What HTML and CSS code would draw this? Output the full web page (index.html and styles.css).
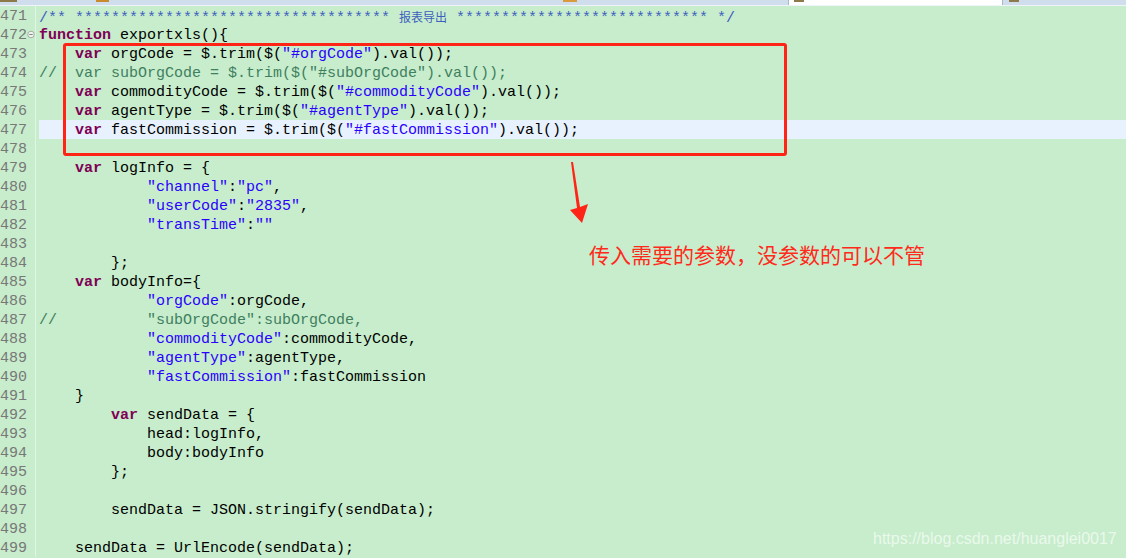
FILE: index.html
```html
<!DOCTYPE html>
<html lang="en">
  <head>
    <meta charset="utf-8">
    <meta name="viewport" content="width=device-width, initial-scale=1.0">
    <title>exportxls</title>
    <link rel="stylesheet" href="styles.css">
  </head>
  <body>
    <div class="tabs">
      <div class="tab"><i class="tab-icon"></i></div>
      <div class="tab"><i class="tab-icon"></i></div>
      <div class="tab"><i class="tab-icon orange"></i></div>
      <div class="tab active"><i class="tab-icon"></i></div>
      <div class="tab last"><i class="tab-icon"></i></div>
    </div>

    <div class="editor">
      <div class="line"><span class="num">471</span><span class="fold"></span><span class="code"><span class="doc">/** *********************************** <span class="cjk">报表导出</span> **************************** */</span></span></div>
      <div class="line"><span class="num">472</span><span class="fold"><svg width="9" height="9" viewBox="0 0 9 9"><circle cx="4.5" cy="4.5" r="3.7" fill="#eef4ee" stroke="#9aa59a"/><path d="M2.6 4.5h3.8" stroke="#6d786d"/></svg></span><span class="code"><b class="kw">function</b> exportxls(){</span></div>
      <div class="line"><span class="num">473</span><span class="fold"></span><span class="code">    <b class="kw">var</b> orgCode = $.trim($(<span class="str">"#orgCode"</span>).val());</span></div>
      <div class="line"><span class="num">474</span><span class="fold"></span><span class="code"><span class="cm">//  var subOrgCode = $.trim($("#subOrgCode").val());</span></span></div>
      <div class="line"><span class="num">475</span><span class="fold"></span><span class="code">    <b class="kw">var</b> commodityCode = $.trim($(<span class="str">"#commodityCode"</span>).val());</span></div>
      <div class="line"><span class="num">476</span><span class="fold"></span><span class="code">    <b class="kw">var</b> agentType = $.trim($(<span class="str">"#agentType"</span>).val());</span></div>
      <div class="line current"><span class="num">477</span><span class="fold"></span><span class="code">    <b class="kw">var</b> fastCommission = $.trim($(<span class="str">"#fastCommission"</span>).val());</span></div>
      <div class="line"><span class="num">478</span><span class="fold"></span><span class="code"></span></div>
      <div class="line"><span class="num">479</span><span class="fold"></span><span class="code">    <b class="kw">var</b> logInfo = {</span></div>
      <div class="line"><span class="num">480</span><span class="fold"></span><span class="code">            <span class="str">"channel"</span>:<span class="str">"pc"</span>,</span></div>
      <div class="line"><span class="num">481</span><span class="fold"></span><span class="code">            <span class="str">"userCode"</span>:<span class="str">"2835"</span>,</span></div>
      <div class="line"><span class="num">482</span><span class="fold"></span><span class="code">            <span class="str">"transTime"</span>:<span class="str">""</span></span></div>
      <div class="line"><span class="num">483</span><span class="fold"></span><span class="code"></span></div>
      <div class="line"><span class="num">484</span><span class="fold"></span><span class="code">        };</span></div>
      <div class="line"><span class="num">485</span><span class="fold"></span><span class="code">    <b class="kw">var</b> bodyInfo={</span></div>
      <div class="line"><span class="num">486</span><span class="fold"></span><span class="code">            <span class="str">"orgCode"</span>:orgCode,</span></div>
      <div class="line"><span class="num">487</span><span class="fold"></span><span class="code"><span class="cm">//          "subOrgCode":subOrgCode,</span></span></div>
      <div class="line"><span class="num">488</span><span class="fold"></span><span class="code">            <span class="str">"commodityCode"</span>:commodityCode,</span></div>
      <div class="line"><span class="num">489</span><span class="fold"></span><span class="code">            <span class="str">"agentType"</span>:agentType,</span></div>
      <div class="line"><span class="num">490</span><span class="fold"></span><span class="code">            <span class="str">"fastCommission"</span>:fastCommission</span></div>
      <div class="line"><span class="num">491</span><span class="fold"></span><span class="code">    }</span></div>
      <div class="line"><span class="num">492</span><span class="fold"></span><span class="code">        <b class="kw">var</b> sendData = {</span></div>
      <div class="line"><span class="num">493</span><span class="fold"></span><span class="code">            head:logInfo,</span></div>
      <div class="line"><span class="num">494</span><span class="fold"></span><span class="code">            body:bodyInfo</span></div>
      <div class="line"><span class="num">495</span><span class="fold"></span><span class="code">        };</span></div>
      <div class="line"><span class="num">496</span><span class="fold"></span><span class="code"></span></div>
      <div class="line"><span class="num">497</span><span class="fold"></span><span class="code">        sendData = JSON.stringify(sendData);</span></div>
      <div class="line"><span class="num">498</span><span class="fold"></span><span class="code"></span></div>
      <div class="line"><span class="num">499</span><span class="fold"></span><span class="code">    sendData = UrlEncode(sendData);</span></div>
    </div>

    <!-- annotations drawn over the screenshot -->
    <div class="mark-box"></div>
    <svg class="arrow" width="24" height="64" viewBox="0 0 24 64">
      <polygon points="1,0 3,0 10,45 18,42 12,61 0,48 7,46" fill="#ff2415"/>
    </svg>
    <div class="note">传入需要的参数，没参数的可以不管</div>
    <div class="watermark">https://blog.csdn.net/huanglei0017</div>
  </body>
</html>
```

FILE: styles.css
```css
html, body {
  margin: 0;
  padding: 0;
}
body {
  width: 1126px;
  height: 558px;
  overflow: hidden;
  position: relative;
  background-color: #c7edcc;
}

/* editor tabs, mostly cut off at the top */
.tabs {
  display: flex;
  height: 5px;
  background-color: #cfdded;
  border-bottom: 1px solid #eef4f8;
}
.tab {
  position: relative;
  height: 5px;
}
.tab:nth-child(1) { width: 88px; }
.tab:nth-child(2) { width: 230px; }
.tab:nth-child(3) { width: 470px; }
.tab.active {
  width: 213px;
  background-color: #fff;
  border-left: 1px solid #a9b8c8;
  border-right: 1px solid #a9b8c8;
}
.tab.last { flex: 1; }
.tab-icon {
  display: block;
  width: 12px;
  height: 2px;
  margin-left: 4px;
  background-color: #8c7a4a;
}
.tab:nth-child(1) .tab-icon { margin-left: 0; width: 17px; }
.tab:nth-child(2) .tab-icon { margin-left: 8px; width: 13px; background-color: #c98a2e; }
.tab-icon.orange { margin-left: 245px; width: 14px; background-color: #d89a3a; }
.tab.active .tab-icon { margin-left: 5px; width: 10px; }
.tab.last .tab-icon { margin-left: 6px; width: 10px; }

.editor {
  font-family: "Liberation Mono", "DejaVu Sans Mono", monospace;
  font-size: 15px;
}
.line {
  display: flex;
  height: 19px;
  line-height: 21px;
}
.current {
  background: linear-gradient(to right, transparent 39px, #e8f2fe 39px);
}
.num {
  width: 27px;
  text-align: right;
  color: #787878;
}
.fold {
  width: 8px;
  border-right: 1px solid #e2f4e5;
  display: flex;
  align-items: center;
  justify-content: center;
}
.code {
  flex: 1;
  padding-left: 3px;
  white-space: pre;
  color: #000;
}
.kw {
  color: #7f0055;
  font-weight: 700;
}
.str {
  color: #2a00ff;
}
.cm {
  color: #3f7f5f;
}
.doc {
  color: #3f5fbf;
}
.cjk {
  font-family: "Noto Sans CJK SC", sans-serif;
  font-size: 12px;
}

.mark-box {
  position: absolute;
  left: 63px;
  top: 43px;
  width: 718px;
  height: 107px;
  border: 3px solid #ff2415;
  border-radius: 3px;
}
.arrow {
  position: absolute;
  left: 570px;
  top: 162px;
}
.note {
  position: absolute;
  left: 589px;
  top: 242px;
  font-family: "Noto Sans CJK SC", sans-serif;
  font-size: 21px;
  line-height: 24px;
  color: #ff2a1c;
}
.watermark {
  position: absolute;
  left: 873px;
  top: 530px;
  font-family: "Liberation Sans", Arial, sans-serif;
  font-size: 16px;
  line-height: 18px;
  color: rgba(255, 255, 255, 0.65);
}
```
